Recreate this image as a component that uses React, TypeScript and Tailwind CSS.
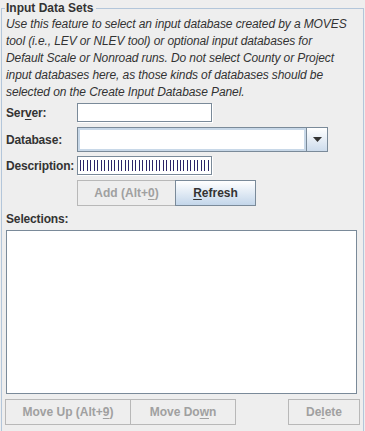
import React from "react";

const U = ({ children }: { children: React.ReactNode }) => (
  <span className="underline underline-offset-[2px] decoration-[1px]">{children}</span>
);

function DisabledButton({ children, className = "" }: { children: React.ReactNode; className?: string }) {
  return (
    <div
      className={
        "h-[26px] flex items-center justify-center border border-[#b8b8b8] bg-[#eeeeee] text-[12px] font-bold text-[#a0a0a0] " +
        className
      }
    >
      {children}
    </div>
  );
}

export default function App() {
  return (
    <div className="w-[365px] h-[431px] bg-[#eeeeee] overflow-hidden font-['Liberation_Sans',Arial,sans-serif] text-[#333333]">
      <fieldset className="mt-[1px] ml-[1px] w-[363px] h-[445px] border border-[#b3c6da] px-[3px]">
        <legend className="px-[1px] pr-[3px] text-[12px] font-bold leading-[14px] text-[#333333]">
          Input Data Sets
        </legend>
        <p className="mt-[1px] pl-[1px] text-[12px] tracking-[-0.1px] italic leading-[17px] whitespace-nowrap text-[#333333]">
          Use this feature to select an input database created by a MOVES
          <br />
          tool (i.e., LEV or NLEV tool) or optional input databases for
          <br />
          Default Scale or Nonroad runs. Do not select County or Project
          <br />
          input databases here, as those kinds of databases should be
          <br />
          selected on the Create Input Database Panel.
        </p>

        {/* Server */}
        <div className="mt-[2px] flex items-center h-[19px]">
          <div className="w-[72px] pl-[1px] text-[12px] font-bold leading-[14px] tracking-[-0.15px]">
            Ser<U>v</U>er:
          </div>
          <div className="w-[135px] h-[19px] bg-white border border-[#7a8a99] shadow-[1px_1px_0_#ffffff]" />
        </div>

        {/* Database */}
        <div className="mt-[5px] flex items-center h-[25px]">
          <div className="w-[72px] pl-[1px] text-[12px] font-bold leading-[14px] tracking-[-0.15px]">Database:</div>
          <div className="w-[251px] h-[25px] flex border border-[#7a8a99] bg-white">
            <div className="flex-1 shadow-[inset_0_0_0_2px_#c8d8e8]" />
            <div className="w-[21px] border-l border-[#7a8a99] bg-linear-to-b from-[#ffffff] to-[#cddcec] flex items-center justify-center">
              <svg width="9" height="5" viewBox="0 0 9 5">
                <path d="M0 0 H9 L4.5 5 Z" fill="#333333" />
              </svg>
            </div>
          </div>
        </div>

        {/* Description */}
        <div className="mt-[4px] flex items-center h-[19px]">
          <div className="w-[72px] pl-[1px] text-[12px] font-bold leading-[14px] tracking-[-0.15px]">Description:</div>
          <div className="w-[135px] h-[19px] bg-white border border-[#7a8a99] shadow-[1px_1px_0_#ffffff] flex items-center px-[2px]">
            <div className="w-full h-[11px] bg-[repeating-linear-gradient(90deg,#2c2468_0px,#2c2468_1px,transparent_1px,transparent_3.45px)]" />
          </div>
        </div>

        {/* Add / Refresh */}
        <div className="mt-[5px] flex pl-[72px]">
          <DisabledButton className="w-[99px]">
            Add (Alt+<U>0</U>)
          </DisabledButton>
          <div className="-ml-px w-[81px] h-[26px] flex items-center justify-center border border-[#7a8a99] bg-linear-to-b from-[#ffffff] to-[#c3d6ea] text-[12px] font-bold text-[#333333]">
            <U>R</U>efresh
          </div>
        </div>

        {/* Selections */}
        <div className="mt-[6px] pl-[1px] text-[12px] font-bold leading-[14px] tracking-[-0.15px]">Selections:</div>
        <div className="mt-[4px] ml-[1px] w-[351px] h-[164px] bg-white border border-[#7a8a99]" />

        {/* Bottom buttons */}
        <div className="mt-[5px] flex">
          <DisabledButton className="w-[126px]">
            Move Up (Alt+<U>9</U>)
          </DisabledButton>
          <DisabledButton className="-ml-px w-[106px]">
            Move Do<U>w</U>n
          </DisabledButton>
          <DisabledButton className="ml-auto w-[72px]">
            De<U>l</U>ete
          </DisabledButton>
        </div>
      </fieldset>
    </div>
  );
}
